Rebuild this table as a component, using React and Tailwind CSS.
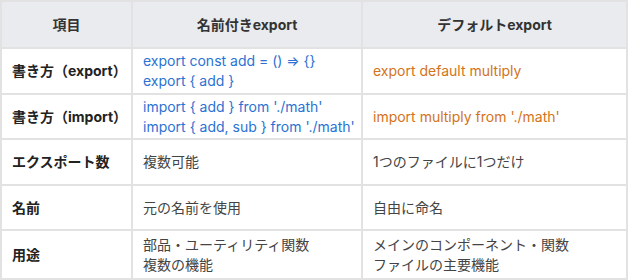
import React from 'react';

const ROWS = [
  {
    label: '書き方（export）',
    named: ['export const add = () => {}', 'export { add }'],
    def: ['export default multiply'],
    code: true,
    h: 'h-[46px]'
  },
  {
    label: '書き方（import）',
    named: ["import { add } from './math'", "import { add, sub } from './math'"],
    def: ["import multiply from './math'"],
    code: true,
    h: 'h-[45px]'
  },
  { label: 'エクスポート数', named: ['複数可能'], def: ['1つのファイルに1つだけ'], h: 'h-[46px]' },
  { label: '名前', named: ['元の名前を使用'], def: ['自由に命名'], h: 'h-[45px]' },
  {
    label: '用途',
    named: ['部品・ユーティリティ関数', '複数の機能'],
    def: ['メインのコンポーネント・関数', 'ファイルの主要機能'],
    h: 'h-[49px]'
  }
];

function Lines({ lines }) {
  return lines.map((line, i) => <div key={i}>{line}</div>);
}

export default function App() {
  return (
    <div className="w-[628px] h-[280px] bg-white font-['Inter','Noto_Sans_CJK_JP',sans-serif] text-[14px] leading-[20px]">
      <table className="w-[628px] table-fixed border-collapse border-2 border-[#e2e2e2]">
        <colgroup>
          <col className="w-[131px]" />
          <col className="w-[230px]" />
          <col />
        </colgroup>
        <thead>
          <tr className="h-[47px] bg-[#e9ebee] text-[#333] font-bold">
            <th className="border-2 border-[#e2e2e2] text-center">項目</th>
            <th className="border-2 border-[#e2e2e2] text-center">名前付きexport</th>
            <th className="border-2 border-[#e2e2e2] text-center">デフォルトexport</th>
          </tr>
        </thead>
        <tbody>
          {ROWS.map((row) => (
            <tr key={row.label} className={row.h}>
              <td className="border-2 border-[#e2e2e2] pl-[10px] pr-0 font-bold text-[#222] whitespace-nowrap">
                {row.label}
              </td>
              <td
                className={
                  row.code
                    ? 'border-2 border-[#e2e2e2] pl-[10px] pr-0 whitespace-nowrap text-[#2a72d4]'
                    : 'border-2 border-[#e2e2e2] pl-[10px] pr-0 whitespace-nowrap text-[#444]'
                }
              >
                <Lines lines={row.named} />
              </td>
              <td
                className={
                  row.code
                    ? 'border-2 border-[#e2e2e2] pl-[10px] pr-0 whitespace-nowrap text-[#d3731a]'
                    : 'border-2 border-[#e2e2e2] pl-[10px] pr-0 whitespace-nowrap text-[#444]'
                }
              >
                <Lines lines={row.def} />
              </td>
            </tr>
          ))}
        </tbody>
      </table>
    </div>
  );
}
